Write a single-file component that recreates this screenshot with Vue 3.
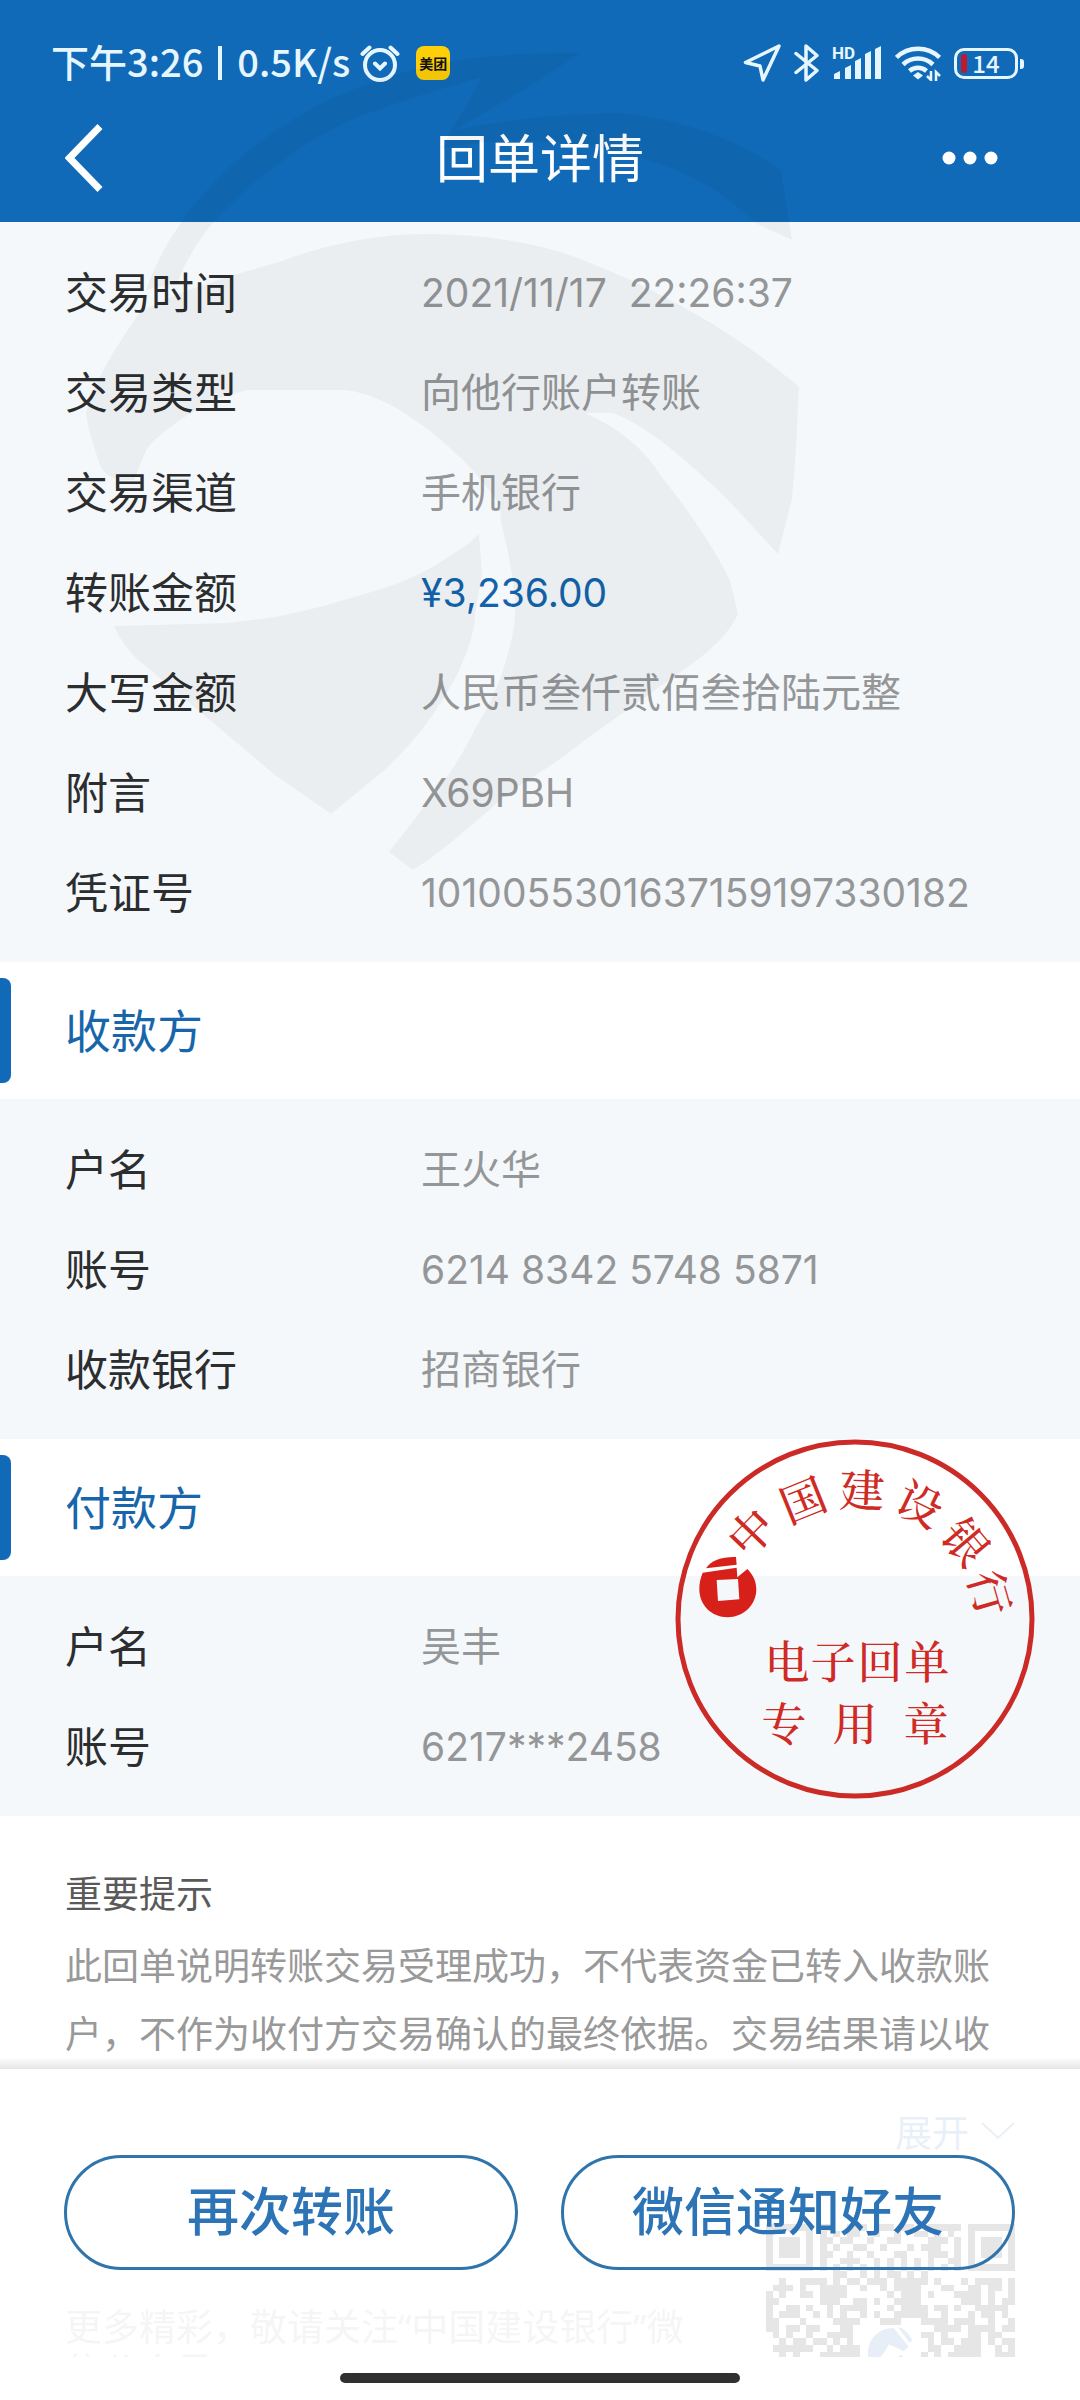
<script setup>
const details = [
  { label: '交易时间', value: '2021/11/17\u00a0 22:26:37', numeric: true },
  { label: '交易类型', value: '向他行账户转账' },
  { label: '交易渠道', value: '手机银行' },
  { label: '转账金额', value: '¥3,236.00', numeric: true, amount: true },
  { label: '大写金额', value: '人民币叁仟贰佰叁拾陆元整' },
  { label: '附言', value: 'X69PBH', numeric: true },
  { label: '凭证号', value: '1010055301637159197330182', numeric: true },
]

const payee = [
  { label: '户名', value: '王火华' },
  { label: '账号', value: '6214 8342 5748 5871', numeric: true },
  { label: '收款银行', value: '招商银行' },
]

const payer = [
  { label: '户名', value: '吴丰' },
  { label: '账号', value: '6217***2458', numeric: true },
]

// Characters along the rim of the seal: centre point and rotation
const sealArc = [
  { char: '中', x: 76, y: 93, angle: -46 },
  { char: '国', x: 128, y: 61, angle: -22 },
  { char: '建', x: 187, y: 51, angle: 2 },
  { char: '设', x: 245, y: 65, angle: 26 },
  { char: '银', x: 291, y: 103, angle: 50 },
  { char: '行', x: 315, y: 154, angle: 74 },
]
const sealLines = [
  { char: '电', x: 112, y: 223 },
  { char: '子', x: 158, y: 223 },
  { char: '回', x: 205, y: 223 },
  { char: '单', x: 252, y: 223 },
  { char: '专', x: 109, y: 285 },
  { char: '用', x: 180, y: 285 },
  { char: '章', x: 251, y: 285 },
]

const qrRows = [
  '#######.##..###.###.##..#####.#######',
  '#.....#.#.#.##..#..#..##.#.#..#.....#',
  '#.###.#.##.##..#..##....###.#.#.###.#',
  '#.###.#.#.#..##..#...#.###..#.#.###.#',
  '#.###.#.##..#..#...##...###.#.#.###.#',
  '#.....#.#..###..#.#.#.#.#..##.#.....#',
  '#######.#.#.#.#.#.#.#.#.#.#.#.#######',
  '..........##..#.#.##.#.#.............',
  '..#..####.#.##.###.#####.#...#.####.#',
  '.###.#..####..#..#.####...##..##.##.#',
  '#.#..##.####......#.###.#...####.#..#',
  '##......###..##.#..####......###.#.##',
  '#..##.#..#.####...#.####.##.#..#####.',
  '#.###..#.#.#..#.#..#####..#...#.##.#.',
  '##...#....####...###...####.###..#..#',
  '##.##.##...##............####.####.##',
  '.#.#..#..####..........##.#...##.##..',
  '..#.##.##.#.#...........#.##.###.#.##',
  '.######..#.###..........##..####..#.#',
  '..#.#...######.........#.#.#####..###',
]
const qrPath = qrRows
  .flatMap((row, y) => [...row].map((cell, x) => (cell === '#' ? `M${x} ${y}h1v1h-1z` : '')))
  .join('')
</script>

<template>
  <div class="screen">
    <header class="header">
      <div class="status">
        <div class="status-left">
          <span>下午3:26</span>
          <i class="divider"></i>
          <span>0.5K/s</span>
          <svg class="alarm" width="40" height="38" viewBox="0 0 40 38" fill="none" stroke="currentColor" stroke-width="4" stroke-linecap="round" aria-hidden="true">
            <circle cx="20" cy="21" r="15" />
            <path d="M2.500 10L9.500 3.500M37.500 10L30.500 3.500M15 19.500l5 5 5-5" />
          </svg>
          <span class="app-badge">美团</span>
        </div>
        <div class="status-right">
          <svg width="38" height="38" viewBox="0 0 38 38" fill="none" stroke="currentColor" stroke-width="3.500" stroke-linejoin="round" aria-hidden="true">
            <path d="M36 2L2.500 18.500l14.500 3.500 3 14z" />
          </svg>
          <svg width="25" height="40" viewBox="0 0 25 40" fill="none" stroke="currentColor" stroke-width="3.500" stroke-linejoin="round" stroke-linecap="round" aria-hidden="true">
            <path d="M2 10.500L23 27.500 12 37V3l11 9.500L2 29.500" />
          </svg>
          <svg width="50" height="40" viewBox="0 0 50 40" fill="currentColor" aria-hidden="true">
            <text x="0" y="16" font-size="17" font-weight="700" font-family="Roboto, sans-serif">HD</text>
            <path d="M2 31l6-3v8H2zM13 25l6-3v14h-6zM23 18l6-3v21h-6zM33 11l6-3v28h-6zM43 6l6-3v33h-6z" />
          </svg>
          <svg width="46" height="36" viewBox="0 0 46 36" fill="none" stroke="currentColor" stroke-width="4.500" aria-hidden="true">
            <path d="M1.500 12.500a31 31 0 0 1 43 0M8 19.500a22 22 0 0 1 30 0M14.500 26a13 13 0 0 1 17 0" />
            <path d="M23 27l5 3.500-5 4-5-4z" fill="currentColor" stroke="none" />
            <path d="M36 26v9l-4-4M41 36v-9l4 4" stroke-width="2.500" />
          </svg>
          <div class="battery"><i class="charge"></i>14</div>
        </div>
      </div>
      <nav class="nav">
        <button class="back" type="button" aria-label="返回">
          <svg width="38" height="68" viewBox="0 0 38 68" fill="none" stroke="currentColor" stroke-width="7" aria-hidden="true">
            <path d="M35 2.500L4.500 34 35 65.500" />
          </svg>
        </button>
        <h1>回单详情</h1>
        <button class="more" type="button" aria-label="更多">
          <svg width="58" height="16" viewBox="0 0 58 16" fill="currentColor" aria-hidden="true">
            <circle cx="8" cy="8" r="6.500" /><circle cx="29" cy="8" r="6.500" /><circle cx="50" cy="8" r="6.500" />
          </svg>
        </button>
      </nav>
    </header>

    <div class="body">
      <main class="scroll">
        <dl class="panel">
          <div v-for="row in details" :key="row.label" class="row">
            <dt>{{ row.label }}</dt>
            <dd :class="{ numeric: row.numeric, amount: row.amount }">{{ row.value }}</dd>
          </div>
        </dl>

        <section>
          <h2>收款方</h2>
          <dl class="panel">
            <div v-for="row in payee" :key="row.label" class="row">
              <dt>{{ row.label }}</dt>
              <dd :class="{ numeric: row.numeric }">{{ row.value }}</dd>
            </div>
          </dl>
        </section>

        <section class="payer">
          <h2>付款方</h2>
          <dl class="panel">
            <div v-for="row in payer" :key="row.label" class="row">
              <dt>{{ row.label }}</dt>
              <dd :class="{ numeric: row.numeric }">{{ row.value }}</dd>
            </div>
          </dl>
          <svg class="seal" width="360" height="360" viewBox="0 0 360 360" fill="#cf2a24">
            <circle cx="180" cy="180" r="177" fill="none" stroke="#cb2a27" stroke-width="5" />
            <text v-for="c in sealArc" :key="c.char" :transform="`translate(${c.x} ${c.y}) rotate(${c.angle})`" y="17" text-anchor="middle">{{ c.char }}</text>
            <text v-for="c in sealLines" :key="c.char" :x="c.x" :y="c.y + 17" text-anchor="middle">{{ c.char }}</text>
            <g transform="translate(-15 -19) scale(.3333)" fill="#d8201a">
              <path d="M138 445C155 420 185 410 228 411L230 434Z" />
              <path fill-rule="evenodd" d="M128 458L230 443 232 472 262 447C280 465 289 485 289 508C289 555 250 592 203 592C155 592 118 555 118 508C118 490 121 475 128 458ZM170 480L174 543 238 538 234 477Z" />
            </g>
          </svg>
        </section>

        <section class="notice">
          <h3>重要提示</h3>
          <p>此回单说明转账交易受理成功，不代表资金已转入收款账户，不作为收付方交易确认的最终依据。交易结果请以收</p>
          <button class="expand" type="button">
            展开
            <svg width="34" height="18" viewBox="0 0 34 18" fill="none" stroke="currentColor" stroke-width="2" aria-hidden="true"><path d="M1 1l16 15L33 1" /></svg>
          </button>
          <div class="follow">
            <p>更多精彩，敬请关注“中国建设银行”微信公众号</p>
            <svg class="qr" width="249" height="249" viewBox="0 0 37 37" aria-hidden="true">
              <path :d="qrPath" shape-rendering="crispEdges" />
              <path fill="#1b4fb4" d="M15.300 20.500C14.600 17.500 16.500 15.400 19 15.500L21.200 18.200 20.500 18.900 18.300 17.900 16.600 20.500ZM19.600 15.300Q20.800 15.500 21.800 17.300L21.300 17.600ZM19 20.500L20 19.400 21.400 20.500Z" />
            </svg>
          </div>
        </section>
      </main>

      <div class="actions">
        <button type="button">再次转账</button>
        <button type="button">微信通知好友</button>
      </div>
    </div>

    <footer class="home"><i></i></footer>

    <svg class="watermark" width="800" height="872" viewBox="0 0 800 872" aria-hidden="true">
      <path d="M146 290C156 262 168 240 190 210C250 135 330 90 420 68C470 56 530 52 580 53L540 80 500 104 455 130C480 124 560 112 623 113C690 120 745 145 781 170L792 240 757 224C720 190 690 172 640 158C570 138 500 136 441 149L482 77C410 98 370 112 344 123C290 150 235 195 207 230C196 245 185 262 178 282Z" />
      <path d="M86 413C92 390 105 362 138 315C160 296 230 276 282 261C330 243 380 234 427 234C480 234 540 242 585 261C660 290 740 335 799 387L796 450 792 499 778 554C752 527 730 500 709 482C680 455 645 425 613 413H585C620 428 645 450 661 476C690 512 712 545 730 580L738 614C730 632 712 650 689 666L585 740C550 768 530 778 510 792C475 822 445 850 413 870L389 852 427 803C450 775 465 750 475 729C490 705 500 682 506 660C512 640 516 622 515 603C514 580 508 550 501 522C500 510 500 505 496 499C485 485 470 465 455 453C440 438 425 427 413 419C390 402 365 392 344 390H248C230 395 215 398 200 407C180 420 150 440 145 453L134 480C118 482 105 477 100 465C95 450 88 430 86 413Z" />
      <path d="M479 534C470 543 460 550 448 557C435 566 422 573 406 580C385 588 365 594 344 600C320 607 300 612 275 617L227 623 114 626C120 640 128 650 138 660L186 700 275 775 331 814 386 769C403 752 416 738 427 723C440 705 452 686 461 666C470 645 475 628 475 614L482 574Z" />
    </svg>
  </div>
</template>

<style>
body {
  margin: 0;
}
</style>

<style scoped>
.screen {
  position: relative;
  display: flex;
  flex-direction: column;
  height: 100vh;
  overflow: hidden;
  background: #fff;
  color: #2b2d2f;
  font-family: "Noto Sans CJK SC", sans-serif;
}

h1, h2, h3, p, dl, dd {
  margin: 0;
}

button {
  border: 0;
  padding: 0;
  background: none;
  color: inherit;
  font: inherit;
}

.header {
  flex: none;
  padding-bottom: 6px;
  background: #116ab7;
  color: #fff;
}

.status {
  display: flex;
  align-items: center;
  justify-content: space-between;
  box-sizing: border-box;
  height: 100px;
  padding: 26px 56px 0 51px;
  color: #e6f6ff;
  font-size: 38px;
  font-weight: 500;
  line-height: 40px;
}

.status-left,
.status-right {
  display: flex;
  align-items: center;
}

.status-left > span {
  padding-bottom: 4px;
}

.status-right {
  gap: 13px;
}

.divider {
  width: 4px;
  height: 34px;
  margin: 0 15px;
  background: currentColor;
}

.alarm {
  margin: 0 16px 0 10px;
}

.status-left > .app-badge {
  width: 34px;
  padding: 0;
  border-radius: 8px;
  background: #fccf08;
  color: #111;
  font-size: 14px;
  font-weight: 700;
  line-height: 34px;
  text-align: center;
}

.battery {
  position: relative;
  box-sizing: border-box;
  width: 64px;
  height: 31px;
  margin-right: 6px;
  border: 3px solid currentColor;
  border-radius: 10px;
  font-size: 24px;
  line-height: 23px;
  text-align: center;
}

.battery::after {
  content: "";
  position: absolute;
  top: 8px;
  right: -9px;
  width: 4px;
  height: 10px;
  border-radius: 0 3px 3px 0;
  background: currentColor;
}

.charge {
  position: absolute;
  top: 3px;
  left: 4px;
  width: 6px;
  height: 19px;
  border-radius: 3px;
  background: #bd1a32;
}

.nav {
  display: grid;
  grid-template-columns: 1fr auto 1fr;
  align-items: center;
  height: 116px;
  padding: 0 65px;
}

.nav svg {
  display: block;
}

.nav h1 {
  padding-bottom: 4px;
  font-size: 52px;
  font-weight: 400;
  line-height: 64px;
}

.back {
  justify-self: start;
}

.more {
  justify-self: end;
  margin-right: 16px;
}

.body {
  position: relative;
  flex: 1;
  min-height: 0;
}

.scroll {
  height: 100%;
  overflow: hidden auto;
  scrollbar-width: none;
}

.panel {
  padding: 18px 65px 22px;
  background: #f4f8fb;
}

.row {
  display: flex;
  align-items: center;
  height: 100px;
}

dt {
  width: 356px;
  font-size: 43px;
}

dd {
  color: #949698;
  font-size: 40px;
}

.numeric {
  padding-top: 4px;
  font-family: Inter, "Noto Sans CJK SC", sans-serif;
  font-size: 39px;
}

.amount {
  color: #1263ab;
}

h2 {
  position: relative;
  padding: 0 65px 4px;
  color: #1766ab;
  font-size: 46px;
  font-weight: 400;
  line-height: 133px;
}

h2::before {
  content: "";
  position: absolute;
  top: 16px;
  bottom: 16px;
  left: 0;
  width: 11px;
  border-radius: 0 8px 8px 0;
  background: #116ab7;
}

.payer {
  position: relative;
}

.seal {
  position: absolute;
  top: 0;
  right: 45px;
  font-family: "Noto Serif CJK SC", "Noto Sans CJK SC", serif;
  font-size: 45px;
  font-weight: 500;
}

.notice {
  display: flex;
  flex-direction: column;
  padding: 42px 65px;
  color: #999;
  font-size: 37px;
  line-height: 68px;
}

.notice h3 {
  margin-bottom: 4px;
  color: #5a5a5a;
  font-size: 37px;
  font-weight: 400;
}

.expand {
  display: flex;
  align-items: center;
  align-self: flex-end;
  gap: 12px;
  margin-top: 31px;
  color: #116ab7;
}

.follow {
  display: flex;
  align-items: center;
  justify-content: space-between;
  margin-top: 59px;
  font-family: "Noto Sans", "Noto Sans CJK SC", sans-serif;
  line-height: 44px;
}

.follow p {
  width: 630px;
}

.qr {
  flex: none;
}

.actions {
  position: absolute;
  right: 0;
  bottom: 0;
  left: 0;
  display: flex;
  gap: 43px;
  padding: 86px 65px 87px 64px;
  background: rgba(255, 255, 255, 0.9);
}

.actions::before {
  content: "";
  position: absolute;
  right: 0;
  bottom: 100%;
  left: 0;
  height: 12px;
  background: linear-gradient(rgba(0, 0, 0, 0), rgba(0, 0, 0, 0.1));
}

.actions button {
  flex: 1;
  box-sizing: border-box;
  height: 115px;
  padding-bottom: 8px;
  border: 3px solid #2f75ab;
  border-radius: 58px;
  color: #2c74b5;
  font-size: 52px;
  font-weight: 500;
  line-height: 64px;
}

.home {
  display: flex;
  flex: none;
  justify-content: center;
  height: 43px;
}

.home i {
  width: 37%;
  height: 10px;
  margin-top: 16px;
  border-radius: 5px;
  background: #303030;
}

.watermark {
  position: absolute;
  top: 0;
  left: 0;
  fill: rgba(0, 0, 0, 0.04);
  pointer-events: none;
}
</style>
